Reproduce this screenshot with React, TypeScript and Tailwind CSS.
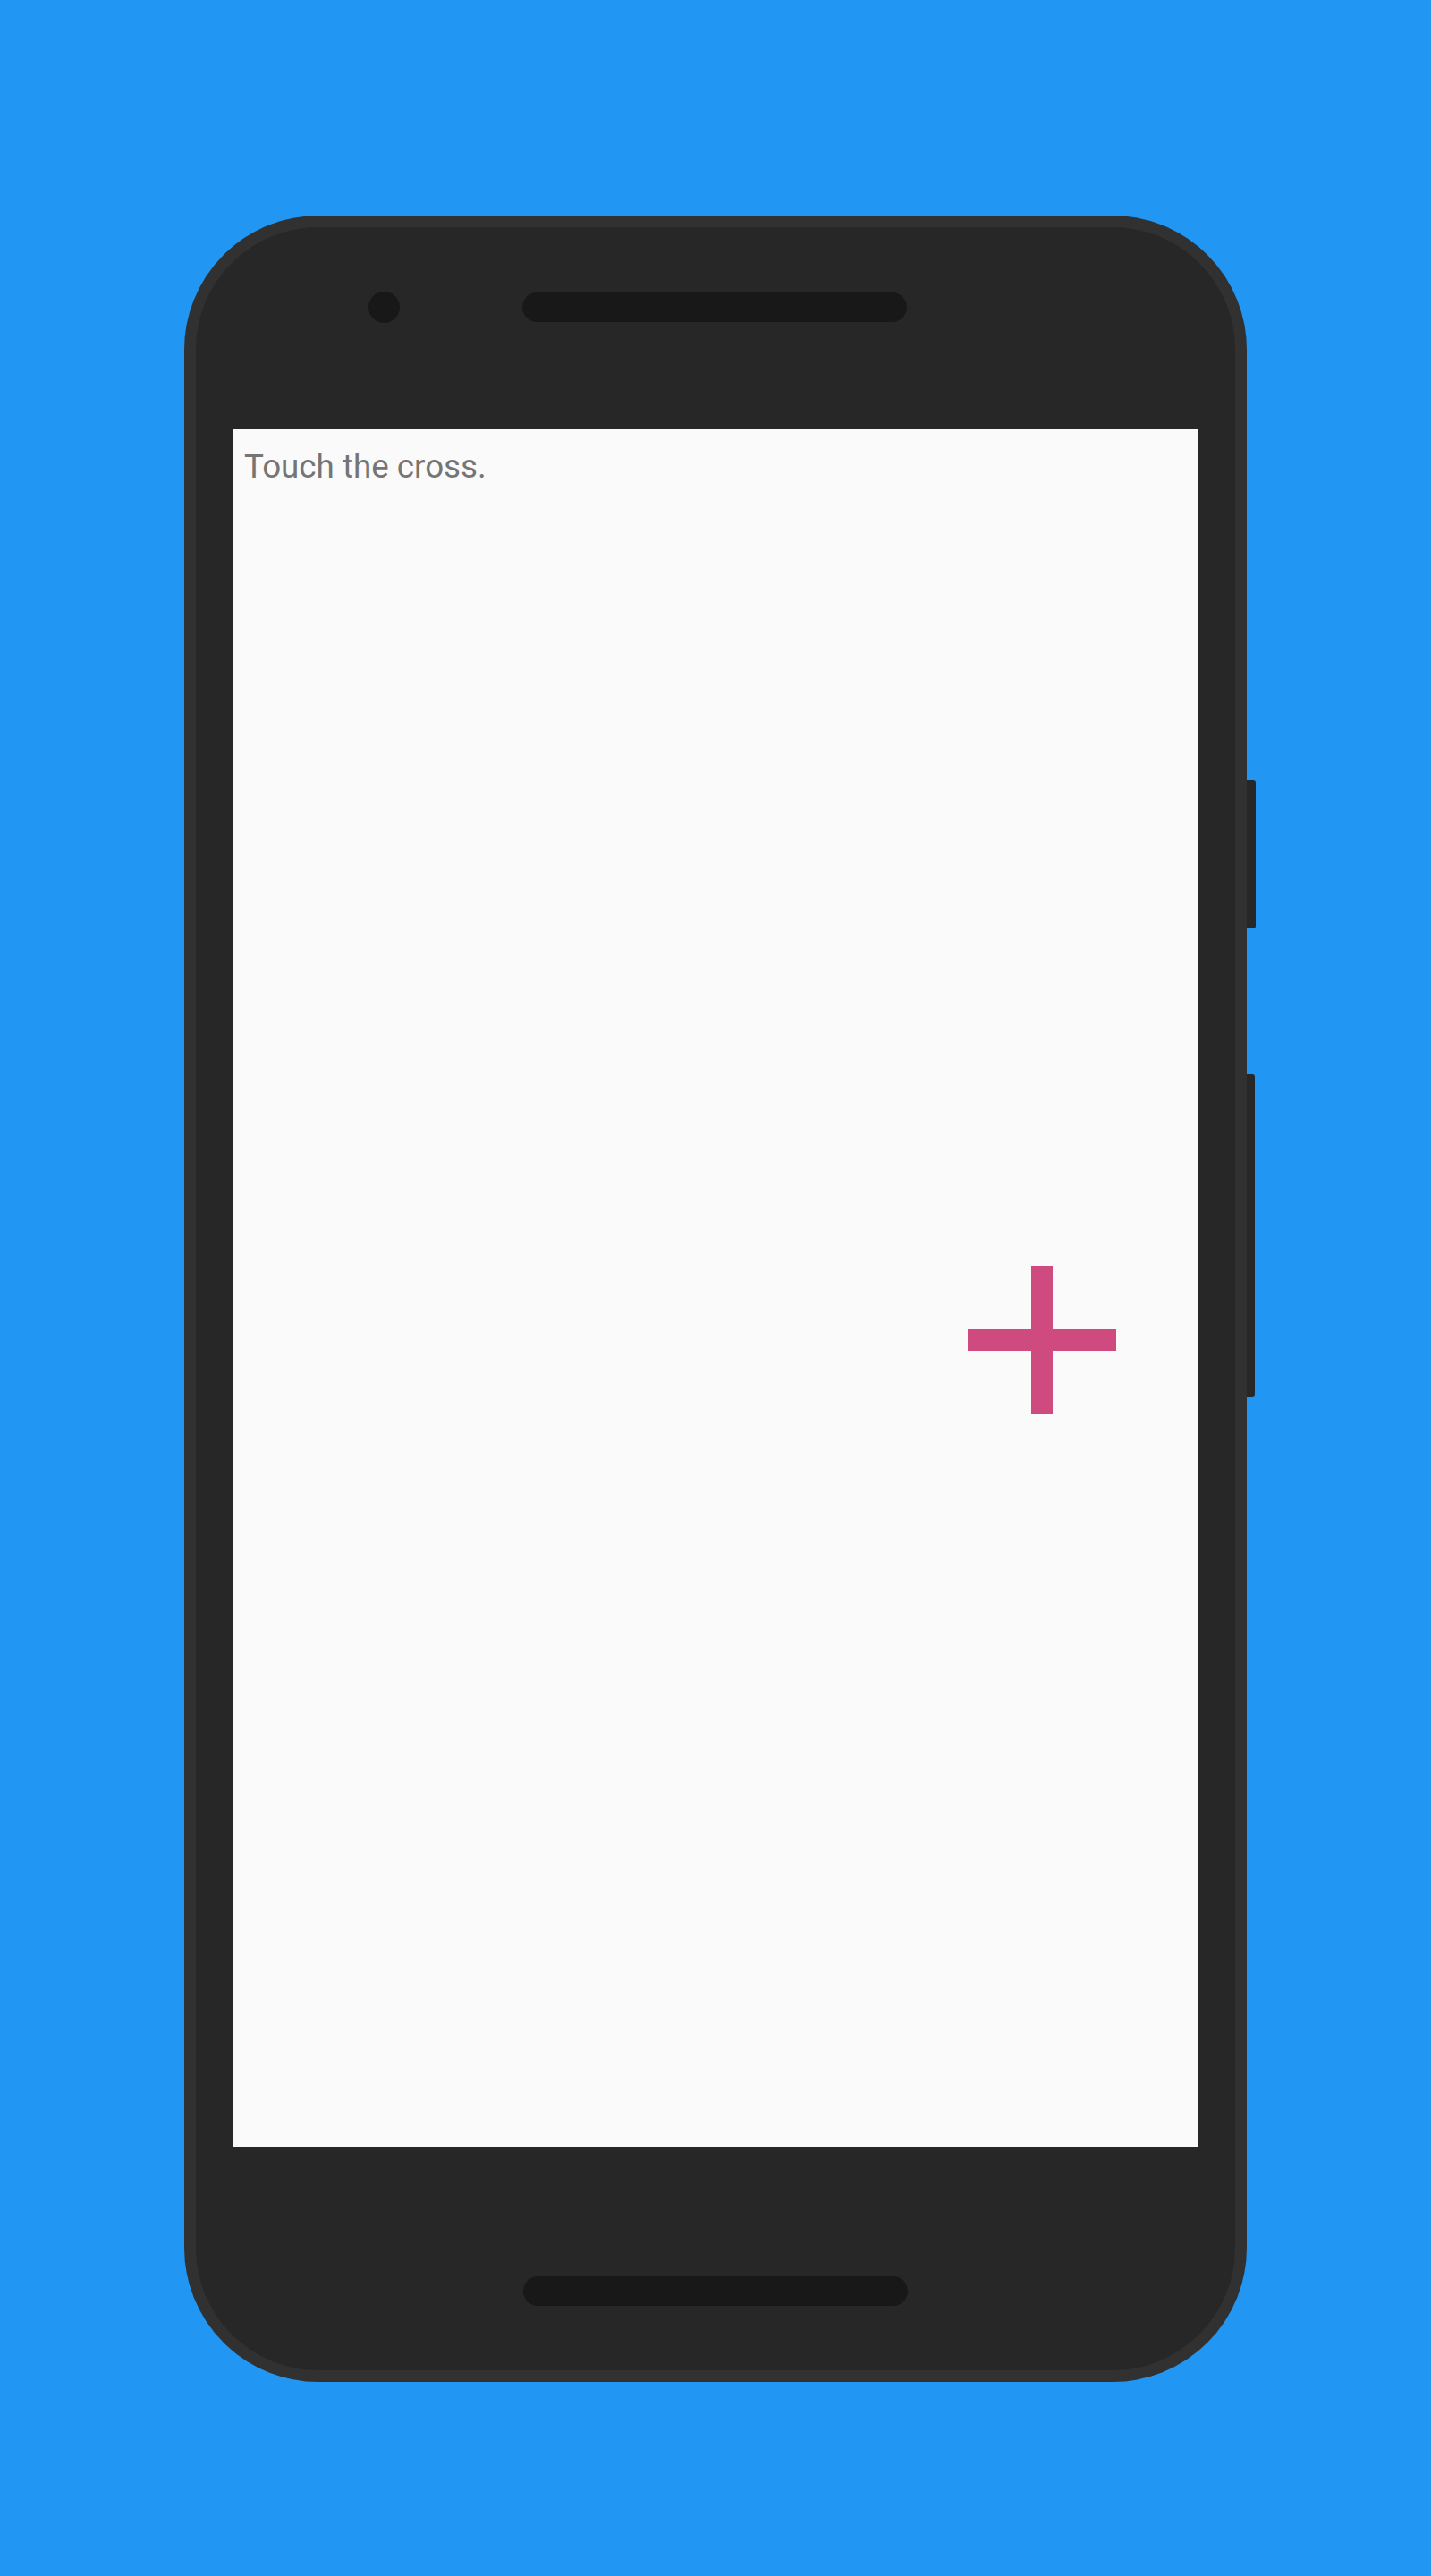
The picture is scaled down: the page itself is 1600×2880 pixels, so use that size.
import React from 'react';

// Touch target drawn as a plain plus sign
const Cross: React.FC = () => (
    <svg width="166" height="166" viewBox="0 0 166 166" className="absolute left-[822px] top-[935px] blur-[0.4px]">
        <rect x="71" y="0" width="24" height="166" fill="#cf4a7e" />
        <rect x="0" y="71" width="166" height="24" fill="#cf4a7e" />
    </svg>
);

const App: React.FC = () => {
    return (
        <div className="w-[1600px] h-[2880px] bg-[#2196f3] pt-[241px] pl-[206px]" style={{ fontFamily: 'Roboto, "Noto Sans", sans-serif' }}>
            {/* Phone body */}
            <div className="relative w-[1188px] h-[2422px] rounded-[150px] border-[13px] border-[#313131] bg-[#272727] flex flex-col">
                {/* Side buttons */}
                <div className="absolute -right-[23px] top-[618px] w-[10px] h-[166px] bg-[#272727] rounded-r-[3px]" />
                <div className="absolute -right-[22px] top-[947px] w-[9px] h-[361px] bg-[#272727] rounded-r-[3px]" />

                {/* Camera + top speaker */}
                <div className="flex items-center gap-[137px] pl-[193px] mt-[72px]">
                    <div className="w-[35px] h-[35px] rounded-full bg-[#181818]" />
                    <div className="w-[430px] h-[33px] rounded-full bg-[#181818]" />
                </div>

                {/* Screen */}
                <div className="relative mx-auto mt-[119px] w-[1080px] h-[1920px] bg-[#fafafa]">
                    <p className="pt-[14px] pl-[13px] text-[36.75px] leading-normal text-[#757575]">Touch the cross.</p>
                    <Cross />
                </div>

                {/* Bottom speaker */}
                <div className="mx-auto mt-[145px] w-[430px] h-[33px] rounded-full bg-[#181818]" />
            </div>
        </div>
    );
};

export default App;
